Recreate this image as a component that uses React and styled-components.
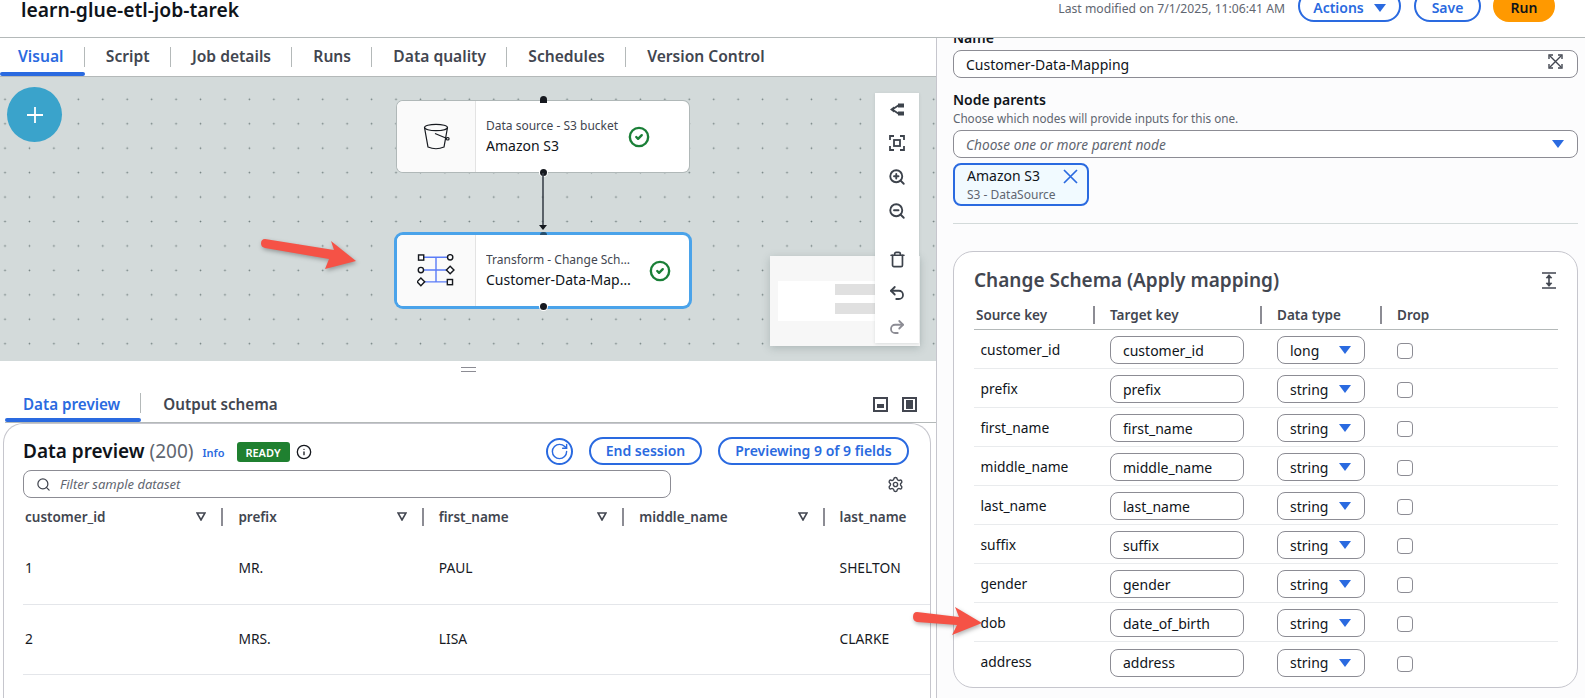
import React from 'react'
import styled, { createGlobalStyle } from 'styled-components'
import { ZoomIn, ZoomOut, Trash, Undo2, Redo2, Search, Settings, RotateCw, Info as InfoIcon, CircleCheck } from 'lucide-react'

const BLUE = '#2a6ae0'
const INK = '#0f141a'
const TAB_INK = '#424650'
const LINE = '#8c8c94'

const Global = createGlobalStyle`
  html, body { margin: 0; padding: 0; background: #fff; }
  body { font-family: "Noto Sans", "Open Sans", sans-serif; color: ${INK}; }
  * { box-sizing: border-box; }
`

const Page = styled.div`
  width: 1585px;
  height: 698px;
  overflow: hidden;
  display: flex;
  flex-direction: column;
`

const Header = styled.header`
  height: 38px;
  flex: none;
  border-bottom: 1px solid #b4b9b9;
  overflow: hidden;
`
const HeaderInner = styled.div`
  margin-top: -10px;
  height: 32px;
  padding: 0 30px 0 21px;
  display: flex;
  align-items: center;
`
const JobTitle = styled.h1`
  margin: 8px 0 0;
  font-size: 19.3px;
  line-height: 20px;
  font-weight: 600;
  flex: 1;
`
const Modified = styled.span`
  margin: 4px 13px 0 0;
  font-size: 12.2px;
  color: #5f6670;
`
const PillButton = styled.button`
  height: ${p => p.$h || 32}px;
  width: ${p => p.$w}px;
  padding: ${p => p.$pt || 0}px 0 0;
  margin-left: ${p => p.$ml || 0}px;
  border: 2px solid ${p => (p.$primary ? '#ff9900' : BLUE)};
  border-radius: 16px;
  background: ${p => (p.$primary ? '#ff9900' : '#fff')};
  color: ${p => (p.$primary ? INK : BLUE)};
  font: 600 14px/1 "Noto Sans", sans-serif;
  display: inline-flex;
  align-items: center;
  justify-content: center;
  gap: 10px;
  flex: none;
`
const Caret = styled.i`
  display: inline-block;
  width: 0;
  height: 0;
  border-left: ${p => p.$size || 6}px solid transparent;
  border-right: ${p => p.$size || 6}px solid transparent;
  border-top: ${p => (p.$size || 6) * 1.45}px solid ${BLUE};
`

const Body = styled.div`
  flex: 1;
  min-height: 0;
  display: flex;
`
const LeftPane = styled.section`
  width: 936px;
  flex: none;
  display: flex;
  flex-direction: column;
`
const RightPane = styled.aside`
  flex: 1;
  min-width: 0;
  overflow: hidden;
  border-left: 1px solid #c6c6cd;
  background: #fcfcfd;
  padding: 0 7px 0 16px;
`

const TabBar = styled.nav`
  height: 39px;
  flex: none;
  display: flex;
  border-bottom: 1px solid #b4b9b9;
`
const Tab = styled.div`
  position: relative;
  height: 38px;
  padding: 0 21.2px 3px ${p => p.$pl || 21.2}px;
  display: flex;
  align-items: center;
  font-size: 15.6px;
  font-weight: 600;
  color: ${p => (p.$active ? BLUE : TAB_INK)};
  &::before {
    content: '';
    display: ${p => (p.$last ? 'none' : 'block')};
    position: absolute;
    right: 0;
    top: 9px;
    height: 20px;
    width: 1px;
    background: #b4b9b9;
  }
  &::after {
    content: '';
    display: ${p => (p.$active ? 'block' : 'none')};
    position: absolute;
    left: 0;
    right: 0;
    bottom: 0;
    height: 4px;
    border-radius: 2px;
    background: ${BLUE};
  }
`

const Canvas = styled.div`
  position: relative;
  height: 284px;
  flex: none;
  background-color: #d3dada;
  background-image: radial-gradient(circle, #6f7d7d 0.7px, transparent 1.1px);
  background-size: 24.45px 24.45px;
  background-position: -7.2px 10.1px;
`
const Fab = styled.div`
  position: absolute;
  left: 7px;
  top: 10px;
  width: 55px;
  height: 55px;
  border-radius: 50%;
  background: #3aa3cb;
  display: flex;
  align-items: center;
  justify-content: center;
`
const Node = styled.div`
  position: absolute;
  left: 397px;
  top: ${p => p.$top}px;
  width: 292px;
  height: 71px;
  background: #fff;
  border-radius: 6px;
  display: flex;
  box-shadow: ${p => (p.$selected ? '0 0 0 3px #4aa3ea' : '0 0 0 1px #b0b8b8')};
`
const NodeIcon = styled.div`
  width: 79px;
  flex: none;
  background: #fafafa;
  border-right: 1px solid #e3e3e3;
  border-radius: 6px 0 0 6px;
  display: flex;
  align-items: center;
  justify-content: center;
`
const NodeText = styled.div`
  width: ${p => p.$w}px;
  margin-left: 10px;
  flex: none;
  display: flex;
  flex-direction: column;
  justify-content: center;
  gap: 1px;
`
const NodeKind = styled.div`
  font-size: 12px;
  line-height: 18px;
  color: #424650;
  white-space: nowrap;
  overflow: hidden;
  text-overflow: ellipsis;
`
const NodeName = styled.div`
  font-size: 14px;
  line-height: 20px;
  color: ${INK};
  white-space: nowrap;
  overflow: hidden;
  text-overflow: ellipsis;
`
const NodeStatus = styled.div`
  margin-left: ${p => p.$ml}px;
  display: flex;
  align-items: center;
  color: #1a7f37;
`
const Handle = styled.span`
  position: absolute;
  left: 143px;
  bottom: -4px;
  width: 7px;
  height: 7px;
  border-radius: 50%;
  background: #16191f;
  box-shadow: 0 0 0 1px #fff;
`
const TopHandle = styled.span`
  position: absolute;
  left: 143px;
  top: ${p => (p.$stub ? -3 : -5)}px;
  width: 7px;
  height: ${p => (p.$stub ? 3 : 7)}px;
  border-radius: 4px 4px 0 0;
  background: ${p => (p.$stub ? '#27506f' : '#16191f')};
`
const Edge = styled.svg`
  position: absolute;
  left: 536px;
  top: 96px;
`
const Overlay = styled.svg`
  position: absolute;
  left: ${p => p.$x}px;
  top: ${p => p.$y}px;
  z-index: 5;
  overflow: visible;
  filter: drop-shadow(1px 2px 2px rgba(0, 0, 0, 0.3));
`
const Minimap = styled.div`
  position: absolute;
  left: 770px;
  top: 179px;
  width: 150px;
  height: 90px;
  background: #f7f7f7;
  box-shadow: 0 2px 8px rgba(60, 80, 80, 0.25);
  overflow: hidden;
`
const MiniView = styled.div`
  margin: 25px 0 0 8px;
  width: 97px;
  height: 40px;
  background: #fff;
  display: flex;
  flex-direction: column;
  align-items: flex-end;
  gap: 8px;
  padding-top: 3px;
`
const MiniBar = styled.div`
  width: 40px;
  height: 11px;
  background: #e0e0e0;
`
const Toolbar = styled.div`
  position: absolute;
  left: 875px;
  top: 16px;
  width: 44px;
  height: 250px;
  background: #fff;
  display: flex;
  flex-direction: column;
  align-items: center;
  box-shadow: 0 1px 3px rgba(60, 80, 80, 0.15);
  z-index: 2;
`
const ToolGroup = styled.div`
  margin-top: ${p => p.$mt}px;
  display: flex;
  flex-direction: column;
`
const ToolBtn = styled.div`
  width: 44px;
  height: 34px;
  display: flex;
  align-items: center;
  justify-content: center;
  color: ${p => (p.$off ? '#8c8c94' : '#3d434c')};
`

const Handlebar = styled.div`
  height: 25px;
  flex: none;
  padding: 6px 0 0 461px;
`
const GripLines = styled.div`
  width: 15px;
  height: 5px;
  border-top: 1px solid #8c8c94;
  border-bottom: 1px solid #8c8c94;
`
const LowerTabs = styled.div`
  height: 37px;
  flex: none;
  margin-left: 5px;
  display: flex;
  align-items: center;
  border-bottom: 1px solid #b4b9b9;
`
const LowerTab = styled(Tab)`
  height: 36px;
  padding-bottom: 0;
  font-size: 15.2px;
  &::before { top: 7px; }
`
const ViewIcons = styled.div`
  margin-left: auto;
  margin-right: 19px;
  display: flex;
  gap: 14px;
`
const ViewIcon = styled.div`
  width: 15px;
  height: 15px;
  border: 2px solid #424650;
  display: flex;
  align-items: ${p => (p.$full ? 'stretch' : 'flex-end')};
  justify-content: center;
  padding: ${p => (p.$full ? '1px 2px' : '0 2px 2px')};
  &::after {
    content: '';
    width: ${p => (p.$full ? '100%' : '7px')};
    height: ${p => (p.$full ? 'auto' : '4px')};
    background: #424650;
  }
`
const PreviewCard = styled.div`
  flex: 1;
  min-height: 0;
  margin: 0 5px 0 3px;
  padding: 13px 0 0 19px;
  border: 1px solid #c6c6cd;
  border-bottom: 0;
  border-radius: 20px 20px 0 0;
  overflow: hidden;
`
const PreviewHead = styled.div`
  height: 28px;
  padding-right: 21px;
  display: flex;
  align-items: center;
`
const CardTitle = styled.h2`
  margin: 0;
  font-size: 19px;
  line-height: 24px;
  font-weight: 600;
  white-space: nowrap;
`
const Count = styled.span`
  font-weight: 400;
  color: #5f6670;
`
const InfoLink = styled.a`
  margin: 3px 0 0 9px;
  font-size: 11px;
  font-weight: 600;
  color: ${BLUE};
`
const Badge = styled.span`
  margin: 2px 0 0 12px;
  width: 53px;
  height: 20px;
  border-radius: 3px;
  background: #1f8030;
  color: #fff;
  font-size: 11px;
  font-weight: 600;
  display: flex;
  align-items: center;
  justify-content: center;
`
const InfoGlyph = styled.span`
  margin: 2px 0 0 6px;
  display: flex;
  color: #16191f;
`
const RoundBtn = styled.div`
  margin-left: auto;
  width: 27px;
  height: 27px;
  border: 2px solid ${BLUE};
  border-radius: 50%;
  color: ${BLUE};
  display: flex;
  align-items: center;
  justify-content: center;
`
const FilterRow = styled.div`
  margin-top: 5px;
  display: flex;
  align-items: center;
  padding-right: 26px;
`
const FilterBox = styled.div`
  width: 648px;
  height: 28px;
  border: 1px solid ${LINE};
  border-radius: 8px;
  background: #fff;
  padding-left: 12px;
  display: flex;
  align-items: center;
  gap: 9px;
  color: #424650;
`
const Placeholder = styled.span`
  font-size: 13px;
  font-style: italic;
  color: #5f6670;
`
const Gear = styled.div`
  margin-left: auto;
  display: flex;
  color: #424650;
`
const DataHead = styled.div`
  margin-top: 5px;
  height: 31px;
  padding-bottom: 4px;
  display: grid;
  grid-template-columns: repeat(4, 200.4px) 1fr;
  align-items: center;
`
const DataHeadCell = styled.div`
  height: 18px;
  padding: 0 ${p => (p.$last ? 0 : 15)}px 0 ${p => (p.$first ? 2 : 15)}px;
  border-right: ${p => (p.$last ? '0' : `2px solid ${LINE}`)};
  display: flex;
  align-items: center;
  justify-content: space-between;
  font-size: 13.5px;
  font-weight: 600;
  color: #424650;
  white-space: nowrap;
`
const DataRow = styled.div`
  height: 70.5px;
  padding-bottom: 2px;
  border-bottom: 1px solid #e4e6ea;
  display: grid;
  grid-template-columns: repeat(4, 200.4px) 1fr;
  align-items: center;
`
const DataCell = styled.div`
  padding-left: ${p => (p.$first ? 2 : 15)}px;
  font-size: 13.8px;
  color: #16191f;
`

const FieldLabel = styled.div`
  margin-top: ${p => p.$mt}px;
  font-size: 14px;
  line-height: 20px;
  font-weight: 600;
`
const FieldHint = styled.div`
  font-size: 11.7px;
  line-height: 16px;
  color: #5f6670;
  margin-bottom: 4px;
`
const FieldBox = styled.div`
  height: 28px;
  margin-top: ${p => p.$mt || 0}px;
  border: 1px solid ${LINE};
  border-radius: 8px;
  background: #fff;
  padding: 0 ${p => p.$pr || 13}px 0 12px;
  display: flex;
  align-items: center;
  justify-content: space-between;
  font-size: 14px;
`
const ExpandSlot = styled.span`
  display: flex;
  margin-bottom: 6px;
`
const ChoosePlaceholder = styled(Placeholder)`
  font-size: 13.7px;
`
const Chip = styled.div`
  margin-top: 5px;
  width: 136px;
  height: 43px;
  border: 2px solid ${BLUE};
  border-radius: 8px;
  background: #f1faff;
  padding: 1px 9px 0 12px;
`
const ChipTop = styled.div`
  display: flex;
  align-items: center;
  justify-content: space-between;
  font-size: 14px;
  line-height: 20px;
`
const ChipSub = styled.div`
  margin-top: 1px;
  font-size: 12px;
  line-height: 16px;
  color: #5f6670;
`
const Rule = styled.hr`
  margin: 17px 0 0;
  border: 0;
  border-top: 1px solid #d3dada;
`
const SchemaCard = styled.div`
  margin-top: 27px;
  height: 437px;
  background: #fff;
  border: 1px solid #c6c6cd;
  border-radius: 20px;
  padding: 16px 19px 0 20px;
`
const SchemaHead = styled.div`
  height: 24px;
  margin-bottom: 8px;
  padding-right: 2px;
  display: flex;
  align-items: center;
  justify-content: space-between;
  color: #424650;
`
const gridCols = '119px 167px 120px 1fr'
const ColHeads = styled.div`
  height: 30px;
  display: grid;
  grid-template-columns: ${gridCols};
  align-items: center;
  border-bottom: 1px solid #b4b9b9;
`
const ColHead = styled.div`
  height: 18px;
  padding-left: ${p => (p.$first ? 2 : 15)}px;
  border-left: ${p => (p.$first ? '0' : `2px solid ${LINE}`)};
  display: flex;
  align-items: center;
  font-size: 13.5px;
  font-weight: 600;
  color: #424650;
`
const SchemaRow = styled.div`
  height: 39px;
  display: grid;
  grid-template-columns: ${gridCols};
  align-items: center;
  border-bottom: ${p => (p.$last ? '0' : '1px solid #e9ebed')};
`
const SourceKey = styled.div`
  padding-left: 6.5px;
  font-size: 13.8px;
`
const CellWrap = styled.div`
  padding: 2px 0 0 17px;
`
const TargetInput = styled.div`
  width: 134px;
  height: 28px;
  border: 1px solid ${LINE};
  border-radius: 8px;
  padding-left: 12px;
  display: flex;
  align-items: center;
  font-size: 14px;
`
const TypeSelect = styled.div`
  width: 88px;
  height: 28px;
  border: 1px solid ${LINE};
  border-radius: 8px;
  padding: 0 13px 0 12px;
  display: flex;
  align-items: center;
  justify-content: space-between;
  font-size: 14px;
`
const Check = styled.div`
  width: 16px;
  height: 16px;
  margin-top: 2px;
  border: 1px solid ${LINE};
  border-radius: 4px;
  background: #fff;
`

const columns = ['customer_id', 'prefix', 'first_name', 'middle_name', 'last_name']
const preview = [
  ['1', 'MR.', 'PAUL', '', 'SHELTON'],
  ['2', 'MRS.', 'LISA', '', 'CLARKE'],
]
const schema = [
  ['customer_id', 'customer_id', 'long'],
  ['prefix', 'prefix', 'string'],
  ['first_name', 'first_name', 'string'],
  ['middle_name', 'middle_name', 'string'],
  ['last_name', 'last_name', 'string'],
  ['suffix', 'suffix', 'string'],
  ['gender', 'gender', 'string'],
  ['dob', 'date_of_birth', 'string'],
  ['address', 'address', 'string'],
]
const tabs = ['Visual', 'Script', 'Job details', 'Runs', 'Data quality', 'Schedules', 'Version Control']

function BucketIcon() {
  return (
    <svg width="28" height="28" viewBox="0 0 28 28" fill="none" stroke="#16191f" strokeWidth="1.2">
      <ellipse cx="14" cy="4.5" rx="11.5" ry="3.2" />
      <path d="M2.5 4.5 L6 24 Q14 27.5 22 24 L25.5 4.5" />
      <path d="M13 10.5 L25 15.5" />
      <rect x="24.5" y="14.5" width="2.5" height="2.5" rx="1" />
    </svg>
  )
}

function TransformIcon() {
  return (
    <svg width="38" height="34" viewBox="0 0 40 36" fill="none" strokeWidth="1.5">
      <g stroke="#5b7cf7">
        <path d="M7 3.5 H33 M7 17 H33 M7 29.5 H33 M20 3.5 V29.5" />
      </g>
      <g stroke="#16191f" fill="#fff">
        <rect x="1.5" y="1" width="5.5" height="5.5" />
        <circle cx="35" cy="3.5" r="2.8" />
        <circle cx="4" cy="17" r="2.8" />
        <path d="M35 13 L39 17 L35 21 L31 17 Z" />
        <path d="M4 25.5 L8 29.5 L4 33.5 L0 29.5 Z" />
        <rect x="32" y="27" width="5.5" height="5.5" />
      </g>
    </svg>
  )
}

function LayoutIcon() {
  return (
    <svg width="15" height="13" viewBox="0 0 15 13" fill="#3d434c">
      <path d="M8 0.5 H14 V4.5 H8 Z M8 8.5 H14 V12.5 H8 Z" />
      <path d="M0 6.5 L4 3.5 L4 9.5 Z" />
      <path d="M3 6 L9 2 M3 7 L9 11" stroke="#3d434c" strokeWidth="1.8" />
    </svg>
  )
}

function FitIcon() {
  return (
    <svg width="16" height="16" viewBox="0 0 16 16" fill="none" stroke="#3d434c" strokeWidth="1.8">
      <path d="M1 5 V1 H5 M11 1 H15 V5 M15 11 V15 H11 M5 15 H1 V11" />
      <rect x="5" y="5" width="6" height="6" />
    </svg>
  )
}

function ExpandIcon() {
  return (
    <svg width="15" height="15" viewBox="0 0 15 15" fill="none" stroke="#424650" strokeWidth="1.4">
      <path d="M1 5 V1 H5 M10 1 H14 V5 M14 10 V14 H10 M5 14 H1 V10" />
      <path d="M2 2 L13 13 M13 2 L2 13" />
    </svg>
  )
}

function StretchIcon() {
  return (
    <svg width="14" height="17" viewBox="0 0 14 17" fill="none" stroke="#424650" strokeWidth="1.6">
      <path d="M0 1 H14 M0 16 H14 M7 3 V14" />
      <path d="M4 6 L7 2.5 L10 6 Z M4 11 L7 14.5 L10 11 Z" fill="#424650" strokeWidth="0.6" />
    </svg>
  )
}

function FilterIcon() {
  return (
    <svg width="10" height="9" viewBox="0 0 10 9" fill="none" stroke="#424650" strokeWidth="1.6">
      <path d="M1 1 H9 L5 8 Z" />
    </svg>
  )
}

function CloseIcon() {
  return (
    <svg width="15" height="15" viewBox="0 0 15 15" stroke={BLUE} strokeWidth="1.7">
      <path d="M1 1 L14 14 M14 1 L1 14" />
    </svg>
  )
}

function RedArrow({ x, y, w, h, d }) {
  return (
    <Overlay $x={x} $y={y} width={w} height={h} viewBox={`0 0 ${w} ${h}`}>
      <path d={d} fill="#f55246" />
    </Overlay>
  )
}

export default function App() {
  return (
    <Page>
      <Global />
      <Header>
        <HeaderInner>
          <JobTitle>learn-glue-etl-job-tarek</JobTitle>
          <Modified>Last modified on 7/1/2025, 11:06:41 AM</Modified>
          <PillButton $w={103} $pt={4}>Actions <Caret /></PillButton>
          <PillButton $w={67} $ml={13} $pt={4}>Save</PillButton>
          <PillButton $w={62} $ml={12} $pt={4} $primary>Run</PillButton>
        </HeaderInner>
      </Header>
      <Body>
        <LeftPane>
          <TabBar>
            {tabs.map((t, i) => (
              <Tab key={t} $active={i === 0} $pl={i === 0 ? 18 : 21.2} $last={i === tabs.length - 1}>{t}</Tab>
            ))}
          </TabBar>
          <Canvas>
            <Fab>
              <svg width="18" height="18" viewBox="0 0 18 18" stroke="#fff" strokeWidth="1.8">
                <path d="M9 1 V17 M1 9 H17" />
              </svg>
            </Fab>
            <Node $top={24}>
              <TopHandle />
              <NodeIcon><BucketIcon /></NodeIcon>
              <NodeText $w={134}>
                <NodeKind>Data source - S3 bucket</NodeKind>
                <NodeName>Amazon S3</NodeName>
              </NodeText>
              <NodeStatus $ml={8}><CircleCheck size={22} strokeWidth={2.6} /></NodeStatus>
              <Handle />
            </Node>
            <Edge width="14" height="60" viewBox="0 0 14 60">
              <path d="M7 0 V52" stroke="#3d434c" strokeWidth="1.6" />
              <path d="M3 52 H11 L7 57 Z" fill="#16191f" />
            </Edge>
            <Node $top={158} $selected>
              <TopHandle $stub />
              <NodeIcon><TransformIcon /></NodeIcon>
              <NodeText $w={148}>
                <NodeKind>Transform - Change Schema (Apply mapping)</NodeKind>
                <NodeName>Customer-Data-Mapping</NodeName>
              </NodeText>
              <NodeStatus $ml={15}><CircleCheck size={22} strokeWidth={2.6} /></NodeStatus>
              <Handle />
            </Node>
            <RedArrow x={260} y={163} w={100} h={32} d="M5 -1 L74 10 L71 1 L96 21 L65 29 L69 19 L5 8 Q1 7 1 3.5 Q1 -1 5 -1 Z" />
            <Minimap>
              <MiniView>
                <MiniBar />
                <MiniBar />
              </MiniView>
            </Minimap>
            <Toolbar>
              <ToolGroup $mt={-1}>
                <ToolBtn><LayoutIcon /></ToolBtn>
                <ToolBtn><FitIcon /></ToolBtn>
                <ToolBtn><ZoomIn size={18} strokeWidth={2.5} /></ToolBtn>
                <ToolBtn><ZoomOut size={18} strokeWidth={2.5} /></ToolBtn>
              </ToolGroup>
              <ToolGroup $mt={14}>
                <ToolBtn><Trash size={17} strokeWidth={2.4} /></ToolBtn>
                <ToolBtn><Undo2 size={18} strokeWidth={2.4} /></ToolBtn>
                <ToolBtn $off><Redo2 size={18} strokeWidth={2.4} /></ToolBtn>
              </ToolGroup>
            </Toolbar>
          </Canvas>
          <Handlebar><GripLines /></Handlebar>
          <LowerTabs>
            <LowerTab $active $pl={18}>Data preview</LowerTab>
            <LowerTab $pl={22} $last>Output schema</LowerTab>
            <ViewIcons>
              <ViewIcon />
              <ViewIcon $full />
            </ViewIcons>
          </LowerTabs>
          <PreviewCard>
            <PreviewHead>
              <CardTitle>Data preview <Count>(200)</Count></CardTitle>
              <InfoLink>Info</InfoLink>
              <Badge>READY</Badge>
              <InfoGlyph><InfoIcon size={16} strokeWidth={2} /></InfoGlyph>
              <RoundBtn><RotateCw size={19} strokeWidth={1.8} /></RoundBtn>
              <PillButton $h={28} $w={113} $ml={16}>End session</PillButton>
              <PillButton $h={28} $w={191} $ml={16}>Previewing 9 of 9 fields</PillButton>
            </PreviewHead>
            <FilterRow>
              <FilterBox>
                <Search size={15} strokeWidth={2} />
                <Placeholder>Filter sample dataset</Placeholder>
              </FilterBox>
              <Gear><Settings size={17} strokeWidth={2} /></Gear>
            </FilterRow>
            <DataHead>
              {columns.map((c, i) => (
                <DataHeadCell key={c} $first={i === 0} $last={i === columns.length - 1}>
                  {c}
                  {i < columns.length - 1 && <FilterIcon />}
                </DataHeadCell>
              ))}
            </DataHead>
            {preview.map(r => (
              <DataRow key={r[0]}>
                {r.map((v, i) => <DataCell key={i} $first={i === 0}>{v}</DataCell>)}
              </DataRow>
            ))}
          </PreviewCard>
        </LeftPane>
        <RightPane>
          <FieldLabel $mt={-10}>Name</FieldLabel>
          <FieldBox $mt={2} $pr={14}>
            Customer-Data-Mapping
            <ExpandSlot><ExpandIcon /></ExpandSlot>
          </FieldBox>
          <FieldLabel $mt={12}>Node parents</FieldLabel>
          <FieldHint>Choose which nodes will provide inputs for this one.</FieldHint>
          <FieldBox>
            <ChoosePlaceholder>Choose one or more parent node</ChoosePlaceholder>
            <Caret />
          </FieldBox>
          <Chip>
            <ChipTop>Amazon S3<CloseIcon /></ChipTop>
            <ChipSub>S3 - DataSource</ChipSub>
          </Chip>
          <Rule />
          <SchemaCard>
            <SchemaHead>
              <CardTitle>Change Schema (Apply mapping)</CardTitle>
              <StretchIcon />
            </SchemaHead>
            <ColHeads>
              <ColHead $first>Source key</ColHead>
              <ColHead>Target key</ColHead>
              <ColHead>Data type</ColHead>
              <ColHead>Drop</ColHead>
            </ColHeads>
            {schema.map((r, i) => (
              <SchemaRow key={r[0]} $last={i === schema.length - 1}>
                <SourceKey>{r[0]}</SourceKey>
                <CellWrap><TargetInput>{r[1]}</TargetInput></CellWrap>
                <CellWrap><TypeSelect>{r[2]}<Caret /></TypeSelect></CellWrap>
                <CellWrap><Check /></CellWrap>
              </SchemaRow>
            ))}
          </SchemaCard>
        </RightPane>
      </Body>
      <RedArrow x={912} y={606} w={72} h={30} d="M5 6 L47 11 L43 1 L70 17 L40 29 L45 19 L5 16 Q1 15 1 11 Q1 6 5 6 Z" />
    </Page>
  )
}
